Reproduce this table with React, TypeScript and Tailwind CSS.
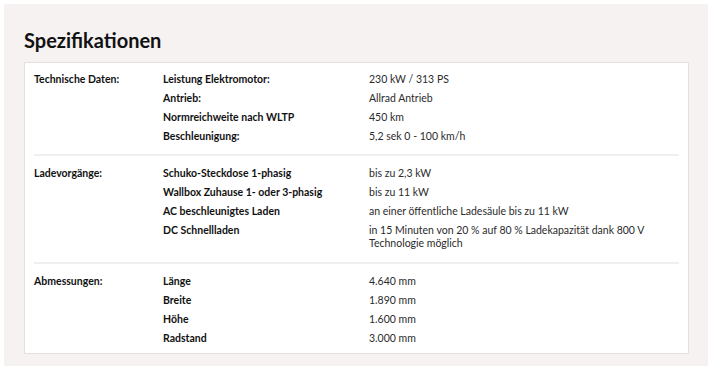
type Row = { label: string; value: string };

type Section = { title: string; rows: Row[] };

const SECTIONS: Section[] = [
  {
    title: "Technische Daten:",
    rows: [
      { label: "Leistung Elektromotor:", value: "230 kW / 313 PS" },
      { label: "Antrieb:", value: "Allrad Antrieb" },
      { label: "Normreichweite nach WLTP", value: "450 km" },
      { label: "Beschleunigung:", value: "5,2 sek 0 - 100 km/h" },
    ],
  },
  {
    title: "Ladevorgänge:",
    rows: [
      { label: "Schuko-Steckdose 1-phasig", value: "bis zu 2,3 kW" },
      { label: "Wallbox Zuhause 1- oder 3-phasig", value: "bis zu 11 kW" },
      { label: "AC beschleunigtes Laden", value: "an einer öffentliche Ladesäule bis zu 11 kW" },
      {
        label: "DC Schnellladen",
        value: "in 15 Minuten von 20 % auf 80 % Ladekapazität dank 800 V Technologie möglich",
      },
    ],
  },
  {
    title: "Abmessungen:",
    rows: [
      { label: "Länge", value: "4.640 mm" },
      { label: "Breite", value: "1.890 mm" },
      { label: "Höhe", value: "1.600 mm" },
      { label: "Radstand", value: "3.000 mm" },
    ],
  },
];

export default function App() {
  return (
    <div className="w-[713px] h-[371px] bg-white pt-[4px] pl-[4px] pr-[5px] pb-[5px] font-['Lato',sans-serif]">
      <div className="h-full bg-[#f6f2f1] px-[20px] pt-[22px]">
        <h2 className="text-[20px] leading-[28px] font-bold text-[#111]">Spezifikationen</h2>
        <div className="mt-[8px] w-[665px] bg-white border border-[#e3e0df] px-[9px] pt-[7px] pb-[5px]">
          {SECTIONS.map((s, i) => (
            <div
              key={s.title}
              className={
                i === 0
                  ? ""
                  : i === 1
                    ? "border-t-2 border-[#efefef] mt-[8px] pt-[8px]"
                    : "border-t-2 border-[#efefef] mt-[9px] pt-[8px]"
              }
            >
              <div className="flex text-[10.5px] leading-[13px]">
                <div className="w-[129px] shrink-0 pt-[3px] font-bold text-[#111]">{s.title}</div>
                <div className="flex-1">
                  {s.rows.map((r) => (
                    <div key={r.label} className="flex py-[3px]">
                      <div className="w-[206px] shrink-0 font-bold text-[#111]">{r.label}</div>
                      <div className="w-[300px] text-[#2b2b2b]">{r.value}</div>
                    </div>
                  ))}
                </div>
              </div>
            </div>
          ))}
        </div>
      </div>
    </div>
  );
}
